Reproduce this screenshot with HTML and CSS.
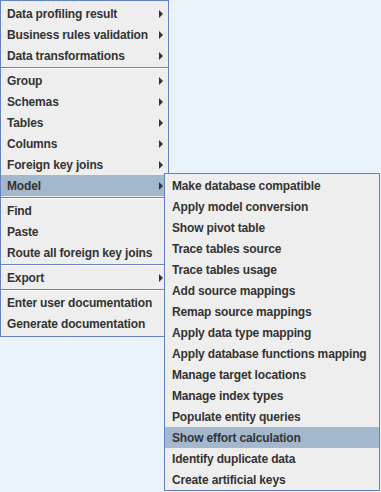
FILE: index.html
```html
<!DOCTYPE html>
<html lang="en">
<head>
    <meta charset="UTF-8">
    <meta name="viewport" content="width=device-width, initial-scale=1.0">
    <title>Model menu</title>
    <link rel="stylesheet" href="styles.css">
</head>
<body>
    <div class="desktop">
        <div class="menu main-menu">
            <div class="item">Data profiling result<svg class="arrow" width="4" height="8"><polygon points="0,0 4,4 0,8"/></svg></div>
            <div class="item">Business rules validation<svg class="arrow" width="4" height="8"><polygon points="0,0 4,4 0,8"/></svg></div>
            <div class="item">Data transformations<svg class="arrow" width="4" height="8"><polygon points="0,0 4,4 0,8"/></svg></div>
            <div class="separator"></div>
            <div class="item">Group<svg class="arrow" width="4" height="8"><polygon points="0,0 4,4 0,8"/></svg></div>
            <div class="item">Schemas<svg class="arrow" width="4" height="8"><polygon points="0,0 4,4 0,8"/></svg></div>
            <div class="item">Tables<svg class="arrow" width="4" height="8"><polygon points="0,0 4,4 0,8"/></svg></div>
            <div class="item">Columns<svg class="arrow" width="4" height="8"><polygon points="0,0 4,4 0,8"/></svg></div>
            <div class="item">Foreign key joins<svg class="arrow" width="4" height="8"><polygon points="0,0 4,4 0,8"/></svg></div>
            <div class="item selected">Model<svg class="arrow" width="4" height="8"><polygon points="0,0 4,4 0,8"/></svg></div>
            <div class="separator"></div>
            <div class="item">Find</div>
            <div class="item">Paste</div>
            <div class="item">Route all foreign key joins</div>
            <div class="separator"></div>
            <div class="item">Export<svg class="arrow" width="4" height="8"><polygon points="0,0 4,4 0,8"/></svg></div>
            <div class="separator"></div>
            <div class="item">Enter user documentation</div>
            <div class="item">Generate documentation</div>
        </div>

        <div class="menu sub-menu">
            <div class="item">Make database compatible</div>
            <div class="item">Apply model conversion</div>
            <div class="item">Show pivot table</div>
            <div class="item">Trace tables source</div>
            <div class="item">Trace tables usage</div>
            <div class="item">Add source mappings</div>
            <div class="item">Remap source mappings</div>
            <div class="item">Apply data type mapping</div>
            <div class="item">Apply database functions mapping</div>
            <div class="item">Manage target locations</div>
            <div class="item">Manage index types</div>
            <div class="item">Populate entity queries</div>
            <div class="item selected">Show effort calculation</div>
            <div class="item">Identify duplicate data</div>
            <div class="item">Create artificial keys</div>
        </div>
    </div>
</body>
</html>
```

FILE: styles.css
```css
body {
    margin: 0;
    padding: 0;
    background-color: #e8f4fa;
    font-family: "Liberation Sans", Arial, sans-serif;
    font-size: 12px;
    font-weight: bold;
    letter-spacing: -0.15px;
    color: #333333;
}

.desktop {
    position: relative;
    width: 381px;
    height: 492px;
}

.menu {
    box-sizing: border-box;
    background-color: #eeeeee;
    border: 1px solid #6382bf;
}

.main-menu {
    width: 169px;
    padding: 2px 0 2px 0;
}

.sub-menu {
    position: absolute;
    left: 164px;
    top: 173px;
    width: 216px;
    padding: 1px 0 0 0;
}

.item {
    display: flex;
    align-items: center;
    justify-content: space-between;
    height: 21px;
    padding: 0 6px 0 6px;
    white-space: nowrap;
}

.main-menu .item {
    padding-right: 5px;
}

.sub-menu .item {
    padding-left: 7px;
}

.item.selected {
    background-color: #a3b8cc;
}

.arrow {
    fill: #333333;
    flex-shrink: 0;
}

.separator {
    height: 1px;
    margin: 1px 0 1px 0;
    background-color: #6382bf;
    border-bottom: 1px solid #ffffff;
}
```
